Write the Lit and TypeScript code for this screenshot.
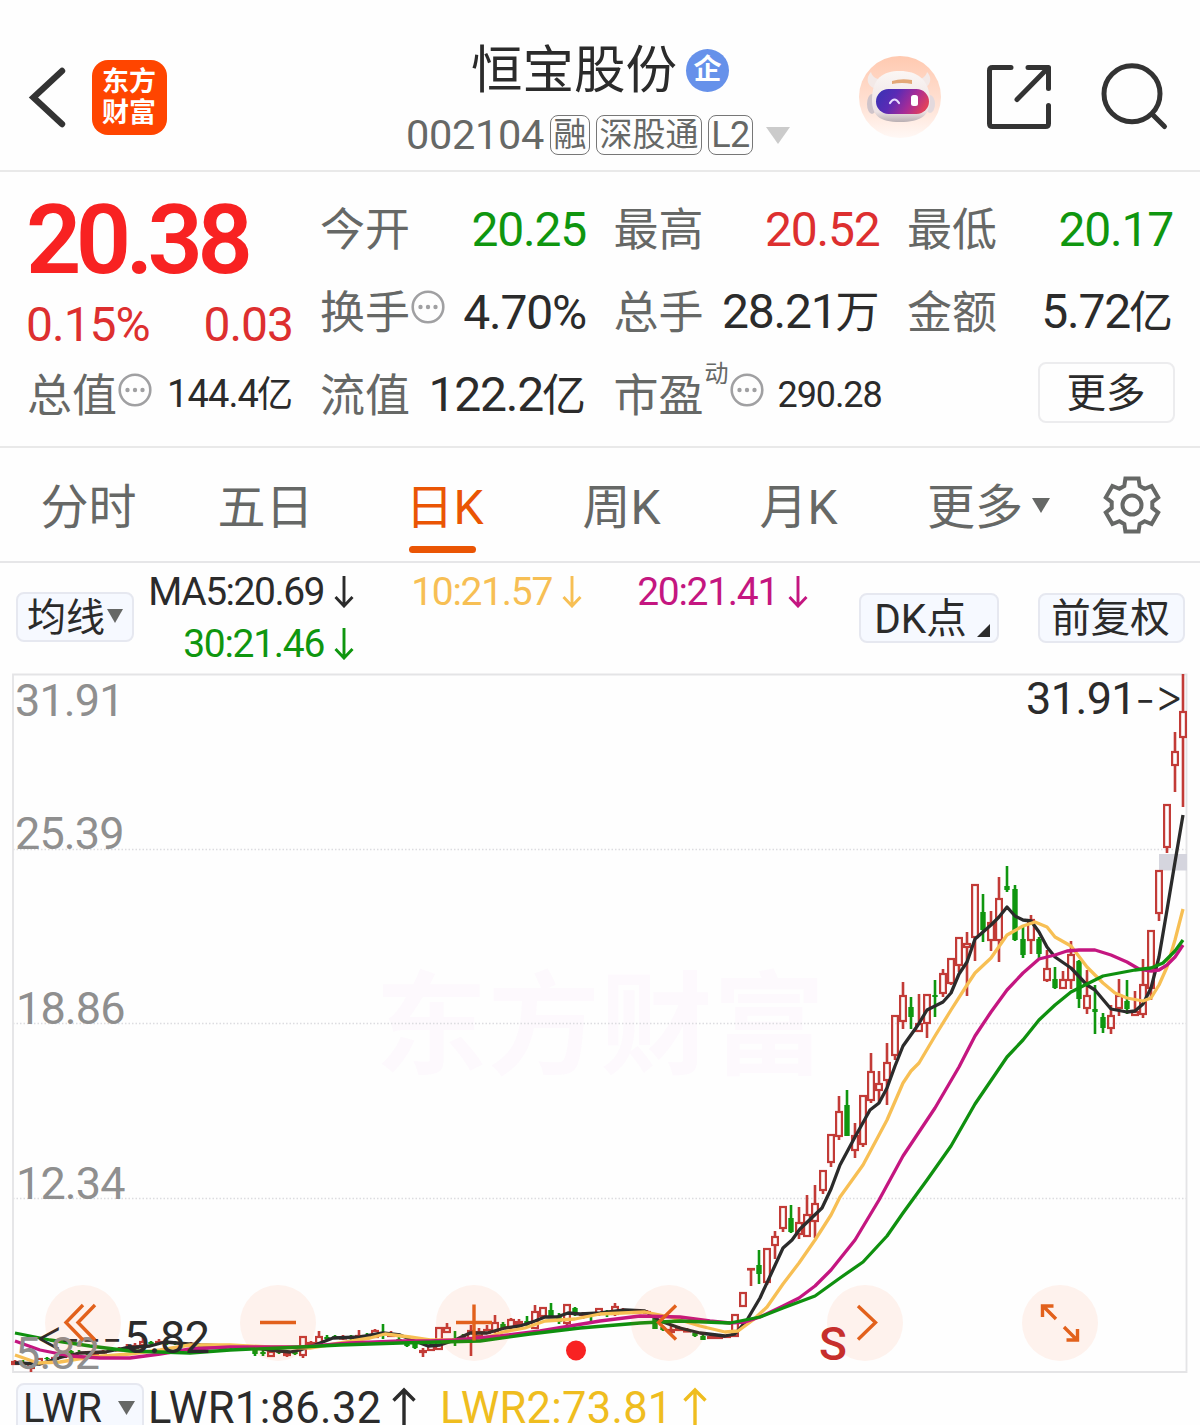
import { LitElement, html, svg, css } from "lit";
import { customElement, property } from "lit/decorators.js";

const INK = "#2b2b2b";

/* [x, kind, high, bodyTop, bodyBottom, low] */
type Candle = [number, "r" | "g", number, number, number, number];

const CANDLES: Candle[] = [
  [15, "r", 1360, 1361, 1364, 1364], [23, "g", 1360, 1362, 1365, 1366], [31, "r", 1360, 1363, 1368, 1372],
  [39, "r", 1358, 1358, 1364, 1364], [47, "g", 1357, 1358, 1359, 1360], [55, "r", 1356, 1357, 1359, 1360],
  [63, "r", 1352, 1354, 1357, 1358], [71, "g", 1350, 1351, 1353, 1354], [79, "g", 1350, 1352, 1353, 1354],
  [87, "g", 1351, 1353, 1354, 1355], [95, "r", 1351, 1352, 1354, 1355], [103, "r", 1350, 1351, 1352, 1353],
  [111, "g", 1347, 1349, 1351, 1352], [119, "r", 1347, 1349, 1350, 1351], [127, "r", 1344, 1347, 1349, 1350],
  [135, "r", 1343, 1345, 1348, 1350], [143, "r", 1338, 1341, 1345, 1348], [151, "g", 1341, 1342, 1344, 1345],
  [159, "r", 1339, 1341, 1342, 1344], [167, "g", 1340, 1342, 1344, 1345], [175, "g", 1341, 1342, 1344, 1345],
  [183, "g", 1342, 1343, 1345, 1346], [191, "r", 1342, 1344, 1345, 1347], [199, "g", 1343, 1345, 1346, 1347],
  [207, "r", 1344, 1346, 1347, 1348], [215, "g", 1344, 1346, 1348, 1348], [223, "r", 1344, 1346, 1347, 1348],
  [231, "g", 1345, 1346, 1348, 1349], [239, "r", 1345, 1347, 1348, 1349], [247, "g", 1346, 1347, 1349, 1350],
  [255, "g", 1349, 1350, 1354, 1356], [263, "g", 1350, 1352, 1354, 1356], [271, "r", 1351, 1351, 1356, 1356],
  [279, "g", 1351, 1352, 1353, 1354], [287, "r", 1351, 1353, 1355, 1357], [295, "g", 1351, 1352, 1354, 1355],
  [303, "r", 1336, 1336, 1355, 1358], [311, "r", 1341, 1342, 1344, 1345], [319, "r", 1331, 1336, 1343, 1344],
  [327, "g", 1335, 1337, 1339, 1340], [335, "g", 1335, 1336, 1338, 1339], [343, "r", 1335, 1337, 1338, 1340],
  [351, "g", 1335, 1336, 1339, 1340], [359, "r", 1330, 1335, 1338, 1339], [367, "g", 1333, 1335, 1337, 1338],
  [375, "r", 1329, 1330, 1337, 1338], [383, "g", 1324, 1333, 1335, 1339], [391, "r", 1331, 1334, 1336, 1337],
  [399, "g", 1337, 1339, 1341, 1342], [407, "g", 1342, 1343, 1346, 1347], [415, "g", 1343, 1344, 1348, 1349],
  [423, "r", 1348, 1350, 1352, 1357], [431, "r", 1344, 1345, 1350, 1350], [439, "r", 1327, 1327, 1349, 1349],
  [447, "r", 1323, 1327, 1332, 1333], [455, "g", 1331, 1338, 1342, 1346], [463, "g", 1334, 1336, 1338, 1340],
  [471, "r", 1325, 1330, 1341, 1356], [479, "r", 1328, 1331, 1336, 1338], [487, "r", 1325, 1329, 1333, 1334],
  [495, "r", 1315, 1322, 1331, 1333], [503, "g", 1322, 1324, 1328, 1329], [511, "r", 1318, 1319, 1327, 1330],
  [519, "r", 1319, 1321, 1324, 1326], [527, "g", 1316, 1321, 1325, 1326], [535, "r", 1305, 1311, 1328, 1329],
  [543, "r", 1307, 1307, 1316, 1317], [551, "g", 1303, 1310, 1316, 1317], [559, "g", 1313, 1316, 1322, 1324],
  [567, "r", 1304, 1304, 1323, 1328], [575, "g", 1307, 1308, 1315, 1316], [583, "r", 1312, 1313, 1315, 1319],
  [591, "g", 1312, 1313, 1316, 1322], [599, "r", 1308, 1308, 1313, 1316], [607, "g", 1310, 1312, 1314, 1317],
  [615, "r", 1303, 1306, 1314, 1316], [623, "r", 1308, 1310, 1312, 1313], [631, "g", 1309, 1311, 1312, 1313],
  [639, "g", 1309, 1310, 1312, 1314], [647, "r", 1310, 1311, 1313, 1314], [655, "g", 1317, 1318, 1329, 1329],
  [663, "g", 1326, 1327, 1330, 1331], [671, "r", 1326, 1329, 1332, 1334], [679, "r", 1326, 1328, 1330, 1331],
  [687, "r", 1328, 1330, 1331, 1332], [695, "g", 1331, 1333, 1336, 1337], [703, "g", 1335, 1336, 1340, 1340],
  [711, "r", 1335, 1336, 1338, 1339], [719, "r", 1334, 1336, 1338, 1339], [727, "r", 1334, 1335, 1337, 1338],
  [735, "r", 1314, 1314, 1336, 1336], [743, "r", 1292, 1292, 1306, 1307], [751, "r", 1268, 1268, 1269, 1286],
  [759, "g", 1250, 1265, 1274, 1284], [767, "r", 1248, 1248, 1282, 1285], [775, "r", 1231, 1236, 1245, 1259],
  [783, "r", 1206, 1206, 1228, 1232], [791, "g", 1205, 1218, 1232, 1233], [799, "r", 1207, 1222, 1234, 1239],
  [807, "r", 1195, 1214, 1236, 1236], [815, "r", 1185, 1203, 1221, 1238], [823, "r", 1170, 1170, 1190, 1194],
  [831, "r", 1134, 1134, 1162, 1167], [839, "r", 1096, 1111, 1136, 1140], [847, "g", 1090, 1105, 1136, 1136],
  [855, "r", 1123, 1135, 1150, 1158], [863, "r", 1095, 1095, 1144, 1147], [871, "r", 1053, 1071, 1100, 1103],
  [879, "r", 1071, 1083, 1090, 1102], [887, "r", 1043, 1062, 1080, 1105], [895, "r", 1015, 1015, 1055, 1060],
  [903, "r", 982, 995, 1021, 1029], [911, "g", 997, 1007, 1017, 1029], [919, "r", 994, 1023, 1031, 1031],
  [927, "r", 994, 994, 1023, 1038], [935, "g", 980, 995, 997, 1017], [943, "r", 969, 973, 993, 997],
  [951, "r", 958, 958, 983, 985], [959, "r", 937, 937, 965, 972], [967, "r", 932, 943, 947, 996],
  [975, "r", 884, 884, 937, 961], [983, "g", 894, 912, 930, 942], [991, "r", 911, 922, 940, 951],
  [999, "r", 877, 898, 940, 962], [1007, "g", 866, 886, 890, 892], [1015, "g", 885, 889, 940, 941],
  [1023, "g", 925, 939, 955, 958], [1031, "r", 915, 919, 940, 954], [1039, "g", 937, 939, 954, 958],
  [1047, "r", 950, 968, 980, 982], [1055, "g", 967, 979, 988, 989], [1063, "r", 971, 979, 988, 988],
  [1071, "r", 941, 954, 980, 989], [1079, "g", 960, 961, 999, 1008], [1087, "r", 970, 995, 1008, 1014],
  [1095, "g", 985, 1009, 1012, 1034], [1103, "g", 1013, 1017, 1028, 1033], [1111, "r", 1005, 1015, 1028, 1034],
  [1119, "r", 979, 995, 1008, 1016], [1127, "g", 980, 1001, 1009, 1014], [1135, "r", 991, 1011, 1015, 1015],
  [1143, "r", 959, 984, 1014, 1018], [1151, "r", 930, 930, 988, 1000], [1159, "r", 870, 870, 913, 921],
  [1167, "r", 804, 804, 847, 853], [1175, "r", 732, 751, 765, 792], [1183, "r", 674, 711, 737, 807],
];

const MA_LINES: { color: string; pts: string }[] = [
  {
    color: INK,
    pts: "15,1363 40,1364 62,1357 80,1353 105,1352 125,1348 150,1346 165,1342 200,1345 250,1347 270,1350 290,1352 300,1350 315,1345 333,1338 360,1337 383,1333 400,1335 412,1340 428,1346 440,1345 455,1340 470,1333 487,1333 505,1328 520,1326 535,1321 545,1317 557,1317 568,1313 580,1314 600,1313 625,1310 645,1311 660,1321 680,1328 700,1333 725,1336 735,1334 747,1320 760,1298 783,1248 792,1240 800,1229 822,1208 831,1189 840,1165 855,1137 870,1110 879,1103 887,1088 895,1066 903,1046 918,1025 927,1010 943,1002 951,993 959,974 967,962 975,939 991,925 999,917 1007,907 1015,916 1023,920 1031,921 1039,932 1047,947 1055,957 1071,968 1087,985 1095,990 1111,1009 1127,1012 1135,1011 1143,1004 1151,988 1159,957 1167,910 1175,862 1183,815",
  },
  {
    color: "#f7bf54",
    pts: "15,1355 38,1363 60,1362 90,1357 130,1354 160,1350 190,1345 230,1345 270,1347 310,1348 340,1343 370,1338 385,1334 410,1337 430,1340 460,1340 485,1338 503,1332 525,1328 545,1321 575,1319 600,1314 645,1312 670,1317 700,1326 725,1332 738,1331 753,1320 767,1307 783,1284 799,1263 815,1240 831,1215 840,1197 863,1165 871,1150 887,1120 903,1083 911,1071 919,1063 935,1036 951,1010 967,985 975,973 991,958 1007,935 1023,926 1035,922 1047,927 1055,937 1071,946 1087,967 1103,983 1115,993 1127,998 1143,1001 1151,998 1159,985 1167,967 1175,940 1183,909",
  },
  {
    color: "#c41680",
    pts: "15,1341 40,1350 70,1356 100,1358 130,1358 160,1354 190,1349 230,1347 300,1347 350,1343 400,1341 430,1341 455,1340 500,1336 540,1331 570,1326 600,1321 640,1316 680,1317 710,1321 730,1323 745,1322 760,1317 783,1306 799,1298 815,1286 831,1270 855,1240 879,1200 903,1156 935,1108 959,1067 975,1036 991,1012 1007,990 1023,973 1039,959 1055,955 1067,951 1079,950 1095,950 1111,955 1127,962 1139,969 1151,971 1159,970 1167,965 1175,957 1183,945",
  },
  {
    color: "#0f900f",
    pts: "15,1333 50,1340 90,1346 130,1351 190,1353 230,1350 280,1348 340,1345 400,1343 440,1342 480,1341 530,1334 580,1328 640,1323 680,1321 730,1323 760,1317 783,1308 815,1296 840,1278 863,1262 887,1236 903,1213 927,1180 951,1146 975,1104 1007,1057 1023,1040 1039,1020 1055,1005 1071,992 1087,984 1103,976 1119,973 1135,970 1151,968 1163,963 1175,951 1183,940",
  },
];

const shared = css`
  :host {
    display: block;
    box-sizing: border-box;
    font-family: Roboto, "Noto Sans CJK SC", sans-serif;
  }
  * {
    box-sizing: border-box;
  }
  svg {
    display: block;
    flex: none;
  }
`;

@customElement("stock-header")
class StockHeader extends LitElement {
  static styles = [
    shared,
    css`
      .bar { display: flex; align-items: flex-start; height: 172px; border-bottom: 2px solid #e9e9e9; padding-left: 26px; }
      .back { margin-top: 62px; }
      .logo {
        width: 75px; height: 75px; margin: 60px 0 0 22px; border-radius: 16px; background: #ff4500; color: #fff;
        display: flex; flex-direction: column; align-items: center; justify-content: center;
        font-weight: 700; font-size: 27px; line-height: 31px; padding-top: 1px; padding-right: 1px;
      }
      .mid { width: 390px; margin-left: 238px; display: flex; flex-direction: column; }
      .title { display: flex; align-items: center; height: 60px; margin-top: 41px; padding-left: 66px; font-size: 51.5px; line-height: 60px; }
      .badge {
        width: 43px; height: 43px; margin: -2px 0 0 9px; border-radius: 50%; background: #6691ea; color: #fff;
        font-size: 28px; font-weight: 700; line-height: 42px; text-align: center;
      }
      .sub { display: flex; align-items: center; height: 40px; margin-top: 14px; padding-left: 1px; color: #666866; font-size: 41.5px; line-height: 42px; }
      .code { letter-spacing: -0.3px; width: 143px; margin-right: 1px; }
      .tag { height: 40px; border: 1.5px solid #777; border-radius: 8px; font-size: 33px; line-height: 37px; text-align: center; margin-right: 6px; white-space: nowrap; }
      .t1 { width: 40px; }
      .t2 { width: 106px; }
      .t3 { width: 45px; font-size: 36px; line-height: 39px; letter-spacing: -0.5px; }
      .caret { margin-left: 7px; }
      .avatar { margin: 56px 0 0 64px; }
      .share { margin: 60px 0 0 43px; }
      .search { margin: 58px 0 0 46px; }
    `,
  ];
  render() {
    return html`<header class="bar">
      <svg class="back" width="44" height="70" viewBox="26 62 44 70" fill="none" stroke="#333" stroke-width="6.4" stroke-linecap="round"><path d="M62 71 33.500 97.500 62 124" /></svg>
      <div class="logo"><span>东方</span><span>财富</span></div>
      <div class="mid">
        <div class="title"><span>恒宝股份</span><span class="badge">企</span></div>
        <div class="sub">
          <span class="code">002104</span><span class="tag t1">融</span><span class="tag t2">深股通</span><span class="tag t3">L2</span>
          <svg class="caret" width="24" height="17" viewBox="0 0 24 17"><path d="M0 0h24L12 17z" fill="#cbcbcb" /></svg>
        </div>
      </div>
      <svg class="avatar" width="82" height="82" viewBox="0 0 82 82">
        <defs>
          <linearGradient id="bg" x1="0" y1="0" x2="0" y2="1"><stop offset="0" stop-color="#ffc9b0" /><stop offset="0.6" stop-color="#ffe2d5" /><stop offset="1" stop-color="#fff8f5" /></linearGradient>
          <linearGradient id="visor" x1="0" y1="0.2" x2="1" y2="0.5"><stop offset="0" stop-color="#3b32b4" /><stop offset="0.35" stop-color="#5a2bb5" /><stop offset="0.7" stop-color="#a82c96" /><stop offset="1" stop-color="#e0405c" /></linearGradient>
          <linearGradient id="shell" x1="0" y1="0" x2="0" y2="1"><stop offset="0" stop-color="#fbf6f4" /><stop offset="0.8" stop-color="#ece2e3" /><stop offset="1" stop-color="#b9afb3" /></linearGradient>
        </defs>
        <circle cx="41" cy="41" r="41" fill="url(#bg)" />
        <path d="M12 16c-5 5-5 14 5 17l9-9c-8 0-13-3-14-8zM68 16c5 5 5 14-5 17l-9-9c8 0 13-3 14-8z" fill="#f3e9e7" />
        <ellipse cx="13" cy="48" rx="5" ry="10" fill="#cfc4ca" /><ellipse cx="71" cy="48" rx="5" ry="9" fill="#e3d9dd" />
        <path d="M13 44C13 22 24 15 41 15s29 8 30 29c0 15-9 22-30 22S13 59 13 44z" fill="url(#shell)" />
        <path d="M33 25q9-3 20-1v4q-10-2-20 0z" fill="#e3a878" />
        <rect x="17" y="33" width="53" height="25" rx="12.500" fill="url(#visor)" />
        <path d="M31 47q4.500-7 9 0" fill="none" stroke="#e8dcff" stroke-width="2.200" stroke-linecap="round" />
        <rect x="52" y="39" width="7" height="11" rx="2.500" fill="#fff" />
      </svg>
      <svg class="share" width="68" height="74" viewBox="984 60 68 74" fill="none" stroke="#333" stroke-width="5" stroke-linecap="round" stroke-linejoin="round"><path d="M1011 67.500h-18.500q-3 0-3 3v53q0 3 3 3h53q3 0 3-3V105.500M1028 67.500h20.500v21M1047 69l-30 30.500" /></svg>
      <svg class="search" width="72" height="76" viewBox="1098 58 72 76" fill="none" stroke="#333" stroke-width="5" stroke-linecap="round"><circle cx="1132" cy="93.700" r="28" /><path d="M1152.500 114.500l12 12" /></svg>
    </header>`;
  }
}

@customElement("info-dot")
class InfoDot extends LitElement {
  static styles = [shared, css`:host { flex: none; margin: -11px 0 0 1px; }`];
  render() {
    return html`<svg width="34" height="34" viewBox="0 0 34 34"><circle cx="17" cy="17" r="15.300" fill="none" stroke="#a0a0a2" stroke-width="2.600" /><g fill="#a0a0a2"><circle cx="9.500" cy="17" r="2.200" /><circle cx="17" cy="17" r="2.200" /><circle cx="24.500" cy="17" r="2.200" /></g></svg>`;
  }
}

@customElement("quote-panel")
class QuotePanel extends LitElement {
  static styles = [
    shared,
    css`
      .panel { display: grid; grid-template-columns: 265px 1fr; column-gap: 28px; height: 276px; padding: 16px 28px 0 28px; border-bottom: 2px solid #e9e9e9; }
      .left { display: flex; flex-direction: column; }
      .price { height: 104px; line-height: 104px; font-size: 97px; font-weight: 600; letter-spacing: -5.6px; color: #f82222; white-space: nowrap; margin-left: -2px; }
      .chg { display: flex; justify-content: space-between; height: 66px; line-height: 66px; font-size: 48px; letter-spacing: -1px; color: #dd2f2f; margin-left: -2px; }
      .row { display: flex; align-items: center; height: 83px; line-height: 83px; white-space: nowrap; }
      .row.total { height: 72px; padding-top: 2px; }
      .label { color: #666866; font-size: 45px; padding-top: 2px; margin-left: -1px; }
      .val { margin-left: auto; font-size: 48px; letter-spacing: -1.2px; margin-top: -1px; }
      .unit { font-size: 44px; letter-spacing: 0; margin-left: -1px; }
      .small { font-size: 38px; letter-spacing: -0.9px; }
      .small .unit { font-size: 36px; }
      .pe { font-size: 36px; letter-spacing: -1.1px; margin-left: 14px; }
      .up { color: #dd2f2f; }
      .down { color: #0f960f; }
      .grid { display: grid; grid-template-columns: repeat(3, 265px); grid-auto-rows: 83px; column-gap: 28.5px; }
      .sup { font-size: 24px; color: #666866; line-height: 30px; margin: -44px 0 0 1px; }
      .more { width: 137px; height: 61px; margin: -6px -2px 0 auto; border: 2px solid #ececee; border-radius: 8px; font-size: 39.5px; line-height: 59px; text-align: center; padding-right: 1px; }
    `,
  ];
  render() {
    return html`<section class="panel">
      <div class="left">
        <div class="price">20.38</div>
        <div class="chg"><span>0.15%</span><span>0.03</span></div>
        <div class="row total"><span class="label">总值</span><info-dot></info-dot><span class="val small">144.4<span class="unit">亿</span></span></div>
      </div>
      <div class="grid">
        <div class="row"><span class="label">今开</span><span class="val down">20.25</span></div>
        <div class="row"><span class="label">最高</span><span class="val up">20.52</span></div>
        <div class="row"><span class="label">最低</span><span class="val down">20.17</span></div>
        <div class="row"><span class="label">换手</span><info-dot></info-dot><span class="val">4.70%</span></div>
        <div class="row"><span class="label">总手</span><span class="val">28.21<span class="unit">万</span></span></div>
        <div class="row"><span class="label">金额</span><span class="val">5.72<span class="unit">亿</span></span></div>
        <div class="row"><span class="label">流值</span><span class="val">122.2<span class="unit">亿</span></span></div>
        <div class="row"><span class="label">市盈</span><span class="sup">动</span><info-dot></info-dot><span class="pe">290.28</span></div>
        <div class="row"><div class="more">更多</div></div>
      </div>
    </section>`;
  }
}

@customElement("period-tabs")
class PeriodTabs extends LitElement {
  static styles = [
    shared,
    css`
      .tabs { display: grid; grid-template-columns: repeat(6, 177px) 1fr; height: 115px; border-bottom: 2px solid #e6e6e8; font-size: 48px; color: #666866; }
      .tab { display: flex; flex-direction: column; align-items: center; padding-top: 27px; line-height: 66px; }
      .name { white-space: nowrap; }
      .shift { margin-left: 4px; }
      .on { color: #ea5504; }
      .on::after { content: ""; width: 67px; height: 7px; border-radius: 4px; background: #ea5504; margin-top: 5px; }
      .drop { flex-direction: row; align-items: flex-start; padding-left: 42px; }
      .caret { margin: 23px 0 0 9px; }
      .gear { margin: 26px 0 0 39px; }
    `,
  ];
  render() {
    const gear: string[] = [];
    for (let i = 0; i < 6; i++) {
      const a = (i * 60 * Math.PI) / 180;
      const p = (r: number, d: number) => {
        const t = a + (d * Math.PI) / 180 - Math.PI / 2;
        return `${(30 + r * Math.cos(t)).toFixed(1)},${(30 + r * Math.sin(t)).toFixed(1)}`;
      };
      gear.push(p(20.5, -22), p(27.3, -14), p(27.3, 14), p(20.5, 22));
    }
    return html`<nav class="tabs">
      <div class="tab"><span class="name">分时</span></div>
      <div class="tab"><span class="name">五日</span></div>
      <div class="tab on"><span class="name shift">日K</span></div>
      <div class="tab"><span class="name shift">周K</span></div>
      <div class="tab"><span class="name shift">月K</span></div>
      <div class="tab drop"><span class="name">更多</span><svg class="caret" width="18" height="15" viewBox="0 0 18 15"><path d="M0 0h18L9 15z" fill="#666866" /></svg></div>
      <svg class="gear" width="62" height="62" viewBox="-1 -1 62 62" fill="none" stroke="#666866" stroke-width="4"><polygon points=${gear.join(" ")} /><circle cx="30" cy="30" r="9.500" /></svg>
    </nav>`;
  }
}

@customElement("trend-arrow")
class TrendArrow extends LitElement {
  @property({ type: Boolean }) up = false;
  static styles = [shared, css`:host { flex: none; }`];
  render() {
    return this.up
      ? html`<svg width="24" height="42" viewBox="0 0 24 42" fill="none" stroke="currentColor" stroke-width="3.400"><path d="M12 42V3M1.500 13.500 12 3l10.500 10.500" /></svg>`
      : html`<svg width="20" height="32" viewBox="0 0 20 32" fill="none" stroke="currentColor" stroke-width="2.900"><path d="M10 0v29M1.500 21 10 30l8.500-9" /></svg>`;
  }
}

@customElement("indicator-bar")
class IndicatorBar extends LitElement {
  static styles = [
    shared,
    css`
      .bar { display: flex; height: 110px; padding-left: 16px; }
      .btn { display: flex; align-items: center; justify-content: center; height: 50px; border: 2px solid #e6e8f0; border-radius: 8px; background: #f6f9ff; font-size: 39px; white-space: nowrap; line-height: 46px; padding-top: 1px; }
      .ma { width: 118px; margin-top: 29px; }
      .values { display: grid; grid-template-columns: 220px 228px 226px; grid-auto-rows: 52px; justify-items: end; align-items: center; margin-top: 3px; font-size: 39px; }
      .v { display: flex; align-items: center; gap: 10px; letter-spacing: -1.3px; white-space: nowrap; line-height: 52px; }
      .black { color: #2b2b2b; letter-spacing: -1.5px; }
      .amber { color: #f7bf54; }
      .pink { color: #c41680; }
      .green { color: #0f960f; }
      .dk { width: 140px; margin: 30px 0 0 51px; font-size: 40.5px; }
      .fq { width: 147px; margin: 30px 0 0 39px; font-size: 39.5px; padding-right: 2px; }
      .tick { margin: 24px -6px 0 10px; }
      .tri { margin: -3px 0 0 2px; }
    `,
  ];
  render() {
    return html`<div class="bar">
      <div class="btn ma">均线<svg class="tri" width="16" height="14" viewBox="0 0 16 14"><path d="M0 0h16L8 14z" fill="#666866" /></svg></div>
      <div class="values">
        <span class="v black">MA5:20.69<trend-arrow></trend-arrow></span>
        <span class="v amber">10:21.57<trend-arrow></trend-arrow></span>
        <span class="v pink">20:21.41<trend-arrow></trend-arrow></span>
        <span class="v green">30:21.46<trend-arrow></trend-arrow></span>
      </div>
      <div class="btn dk">DK点<svg class="tick" width="13" height="13" viewBox="0 0 13 13"><path d="M13 0v13H0z" fill="#2b2b2b" /></svg></div>
      <div class="btn fq">前复权</div>
    </div>`;
  }
}

@customElement("k-chart")
class KChart extends LitElement {
  static styles = [
    shared,
    css`
      :host { position: relative; height: 701px; }
      text { font-family: Roboto, "Noto Sans CJK SC", sans-serif; }
      .axis { font-size: 45px; fill: #8f8f8f; letter-spacing: -0.9px; }
      .mark { font-size: 45px; fill: #2b2b2b; letter-spacing: -0.6px; }
      .lead { font-family: Inter, sans-serif; font-size: 45px; font-weight: 300; fill: #2b2b2b; }
      .water { font-size: 112px; font-weight: 700; fill: #fdf9fd; }
      .sell { font-size: 46px; font-weight: 500; fill: #c62f2c; }
      .controls { position: absolute; left: 45px; top: 612px; display: flex; gap: 119.400px; }
      .ctl { width: 76px; height: 76px; border-radius: 50%; background: rgba(255, 90, 30, 0.075); }
      .signals { position: absolute; left: 0; bottom: 0; }
    `,
  ];
  private candle([x, kind, high, top, bottom, low]: Candle) {
    if (kind === "g") {
      return svg`<line x1=${x} x2=${x} y1=${high} y2=${low} stroke="#0f960f" stroke-width="2.6" /><rect x=${x - 2.7} y=${top} width="5.4" height=${bottom - top} fill="#0f960f" />`;
    }
    return svg`<path d="M${x} ${high}V${top}M${x} ${bottom}V${low}" stroke="#c23b37" stroke-width="2.6" fill="none" /><rect x=${x - 2.9} y=${top + 1} width="5.8" height=${Math.max(bottom - top - 1, 0.5)} stroke="#c23b37" stroke-width="2.2" fill="none" />`;
  }
  render() {
    const icons = [
      "M38 20 21 37.500 38 55M50 20 33 37.500 50 55",
      "M20 37.500h36",
      "M20 37.500h36M38 19.500v36",
      "M45 20.500 27.500 37.500 45 54.500",
      "M31 21l17.500 16.500L31 54.500",
      "M20.500 32V21h11M21 21l13 13M55.500 44v11h-11M55 55 42 42",
    ];
    return html`<svg width="1200" height="701" viewBox="0 673 1200 701">
        <text class="water" x="375" y="1066" textLength="450">东方财富</text>
        <path d="M13 849.500H1187M13 1023.500H1187M13 1198.500H1187" stroke="#dcdce0" stroke-width="1.500" stroke-dasharray="1.500 2" />
        <path d="M13 1372V674.500H1186.500V1372z" fill="none" stroke="#e4e4e6" stroke-width="1.800" />
        <rect x="1159" y="854" width="28" height="16.500" fill="#d5d5de" />
        <text class="axis" x="15" y="716">31.91</text>
        <text class="axis" x="15" y="849">25.39</text>
        <text class="axis" x="16" y="1024">18.86</text>
        <text class="axis" x="16" y="1199">12.34</text>
        ${CANDLES.map((c) => this.candle(c))}
        ${MA_LINES.map((l) => svg`<polyline points=${l.pts} fill="none" stroke=${l.color} stroke-width="3.300" stroke-linejoin="round" />`)}
        <text class="mark" x="1026" y="714">31.91</text>
        <text class="lead" x="1135 1154" y="715 712">-&gt;</text>
        <text class="lead" x="35 60 81 102" y="1352 1354 1354 1354">&lt;---</text>
        <text class="mark" x="124" y="1353">5.82</text>
        <text class="axis" x="15" y="1369">5.82</text>
        <circle cx="576" cy="1350.500" r="10" fill="#f82222" />
      </svg>
      <div class="controls">
        ${icons.map((d) => html`<div class="ctl"><svg width="76" height="76" viewBox="0 0 76 76" fill="none" stroke="#e2611c" stroke-width="3.400"><path d=${d} /></svg></div>`)}
      </div>
      <svg class="signals" width="1200" height="60" viewBox="0 1314 1200 60"><text class="sell" x="819" y="1360">S</text></svg>`;
  }
}

@customElement("lwr-bar")
class LwrBar extends LitElement {
  static styles = [
    shared,
    css`
      .bar { display: flex; height: 51px; overflow: hidden; padding: 9px 0 0 16px; white-space: nowrap; font-size: 43.500px; line-height: 51px; }
      .btn { display: flex; align-items: center; width: 128px; height: 56px; flex: none; border: 2px solid #e6e8f0; border-radius: 8px; background: #f6f9ff; font-size: 40px; padding: 0 0 6px 5px; }
      .tri { margin-left: 16px; }
      .a { width: 244px; margin-left: 4px; letter-spacing: 0.35px; }
      .b { width: 243px; margin-left: 24px; color: #efbd1f; letter-spacing: 0.250px; }
      .b + trend-arrow { color: #efbd1f; }
      trend-arrow { margin-top: 4px; }
    `,
  ];
  render() {
    return html`<div class="bar">
      <div class="btn">LWR<svg class="tri" width="17" height="14" viewBox="0 0 17 14"><path d="M0 0h17L8.500 14z" fill="#666866" /></svg></div>
      <span class="a">LWR1:86.32</span><trend-arrow up></trend-arrow>
      <span class="b">LWR2:73.81</span><trend-arrow up></trend-arrow>
    </div>`;
  }
}

@customElement("app-root")
class AppRoot extends LitElement {
  static styles = [shared, css`:host { width: 1200px; height: 1425px; overflow: hidden; background: #fefefe; color: #2b2b2b; }`];
  render() {
    return html`<stock-header></stock-header><quote-panel></quote-panel><period-tabs></period-tabs><indicator-bar></indicator-bar><k-chart></k-chart><lwr-bar></lwr-bar>`;
  }
}
